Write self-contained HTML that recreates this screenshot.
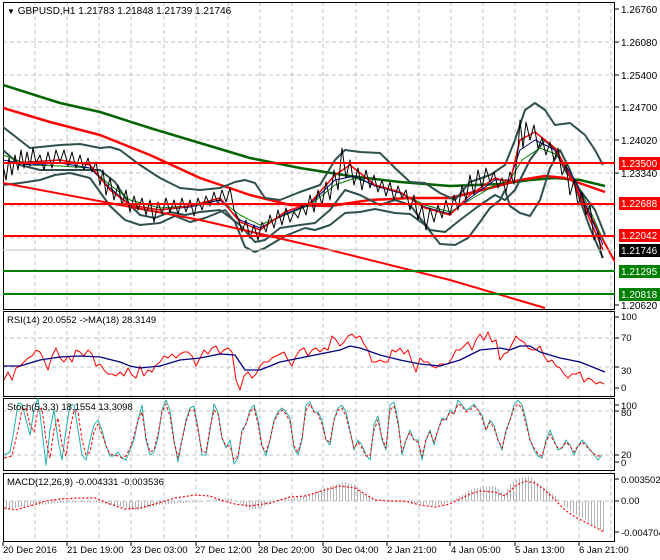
<!DOCTYPE html>
<html><head><meta charset="utf-8"><style>
html,body{margin:0;padding:0;background:#fff;}
svg{display:block;font-family:"Liberation Sans",sans-serif;}
</style></head><body>
<svg width="660" height="560" viewBox="0 0 660 560" xmlns="http://www.w3.org/2000/svg">
<defs>
<pattern id="hs" width="3" height="10" patternUnits="userSpaceOnUse"><rect x="0" y="0" width="1" height="10" fill="#b4b4b4"/></pattern>
<clipPath id="cm"><rect x="3" y="2" width="612" height="307"/></clipPath>
</defs>
<rect width="660" height="560" fill="#fff"/>
<g stroke="#c0c0c0" stroke-dasharray="4,3" stroke-width="1">
<path d="M35 2V542M67 2V542M99 2V542M131 2V542M164 2V542M196 2V542M228 2V542M260 2V542M292 2V542M323 2V542M356 2V542M388 2V542M419 2V542M451 2V542M483 2V542M515 2V542M547 2V542M579 2V542M611 2V542"/>
<path d="M3 42H615M3 75H615M3 107H615M3 140H615M3 173H615M3 206H615M3 238H615M3 271H615"/>
<path d="M3 338H615M3 367H615M3 411H615M3 455H615M3 501H615"/>
</g>
<g fill="none" stroke="#000" stroke-width="1">
<rect x="3.5" y="2.5" width="611" height="307"/>
<rect x="3.5" y="311.5" width="611" height="85"/>
<rect x="3.5" y="398.5" width="611" height="72"/>
<rect x="3.5" y="473.5" width="611" height="68"/>
</g>
<g clip-path="url(#cm)" fill="none" stroke-linejoin="round">
<polyline stroke="#006400" stroke-width="2.5" points="3,85 60,103 100,112 150,128 200,143 250,158 300,168 350,176 400,182 450,186 500,184 530,180 555,178 580,180 605,186"/>
<polyline stroke="#ff0000" stroke-width="2.5" points="3,108 50,122 100,135 150,155 200,178 250,195 290,205 330,206 370,200 410,198 450,198 490,188 520,180 545,176 565,178 585,185 605,192"/>
<polyline stroke="#2f4f4f" stroke-width="2" points="3,127 30,148 60,145 80,144 100,148 110,147 120,150 140,165 160,178 180,188 200,190 220,188 235,182 245,180 255,183 265,198 280,200 300,192 320,185 335,160 345,150 360,152 380,153 395,168 410,182 425,183 440,193 455,200 470,182 490,175 505,165 515,140 525,110 535,103 545,110 555,125 570,123 585,135 595,150 603,165"/>
<polyline stroke="#2f4f4f" stroke-width="2" points="3,150 20,165 40,170 60,170 80,170 100,170 115,182 130,205 140,215 155,218 170,212 185,215 200,212 220,210 240,225 255,242 265,240 280,228 300,225 315,223 330,210 345,190 360,195 380,205 395,200 410,205 420,218 430,230 445,232 460,220 480,205 495,195 505,200 515,190 530,160 545,140 555,150 565,170 580,190 595,210 605,235"/>
<polyline stroke="#2f4f4f" stroke-width="2" points="3,185 20,183 40,180 55,175 70,173 90,178 100,192 110,206 125,220 140,225 160,223 175,216 190,222 205,218 225,210 235,222 245,247 255,252 265,248 285,236 305,228 315,230 330,225 345,213 360,212 375,209 395,213 410,214 425,225 440,244 455,245 468,238 480,222 490,208 500,200 505,190 510,206 520,213 530,216 540,200 550,168 560,150 570,170 580,200 590,228 603,258"/>
<polyline stroke="#ff0000" stroke-width="2" points="3,183 200,220 330,250 450,280 545,308"/>
<polyline stroke="#ff0000" stroke-width="2" points="555,148 575,185 595,225 615,262"/>
<polyline stroke="#008000" stroke-width="1" points="3,155 30,165 60,166 90,168 110,185 130,200 160,208 190,206 220,200 240,215 260,225 285,215 310,205 335,185 355,178 375,185 400,193 425,205 450,212 470,200 495,185 510,180 522,160 540,148 558,155 575,180 590,210 603,240"/>
<polyline stroke="#00008b" stroke-width="1" points="3,160 30,165 60,163 90,168 110,188 130,205 160,210 190,207 220,200 240,220 260,228 285,214 310,204 335,180 355,176 375,186 400,193 425,207 450,214 470,198 495,180 510,180 520,150 535,140 555,150 575,180 590,215 603,245"/>
<polyline stroke="#ff0000" stroke-width="1.5" points="3,163 30,162 60,160 90,165 110,190 130,205 160,210 190,206 220,198 240,222 260,230 285,212 310,203 335,175 350,165 375,185 400,192 425,208 450,215 470,195 495,178 510,182 520,140 535,132 555,148 575,185 590,220 603,250"/>
<polyline stroke="#000" stroke-width="1" points="3,165 6,180 9,158 12,175 15,155 18,170 21,150 24,168 27,152 30,166 33,148 36,163 40,155 44,170 48,152 52,168 56,150 60,162 64,150 68,166 72,152 76,168 80,155 84,170 88,158 92,172 96,162 100,185 103,170 106,195 110,178 114,200 118,185 122,205 126,190 130,212 134,196 138,210 142,198 146,215 150,200 154,222 158,202 162,214 166,198 170,212 174,200 178,214 182,198 186,212 190,200 194,216 198,198 202,210 206,196 210,206 214,192 218,205 222,190 226,202 230,188 234,210 238,218 242,232 246,220 250,238 254,225 258,240 262,222 266,232 270,215 274,228 278,210 282,225 286,208 290,222 294,212 298,218 302,205 306,215 310,195 314,212 318,190 322,205 326,182 330,200 334,170 338,190 342,148 346,178 350,160 354,185 358,168 362,190 366,170 370,188 374,175 378,192 382,180 386,196 390,182 394,200 398,186 402,198 406,190 410,210 414,195 418,220 422,205 426,230 430,208 434,222 438,205 442,218 446,200 450,215 454,195 458,210 462,185 466,200 470,175 474,195 478,170 482,188 486,168 490,182 494,172 498,188 502,178 506,192 510,172 514,184 518,150 520,120 523,148 526,122 530,140 534,125 538,148 542,138 546,155 550,142 554,160 558,148 562,175 566,165 570,195 574,180 578,205 582,192 586,215 590,205 594,240 598,232 602,258"/>
</g>
<g stroke-width="2">
<line x1="3" y1="163" x2="615" y2="163" stroke="#ff0000"/>
<line x1="3" y1="204" x2="615" y2="204" stroke="#ff0000"/>
<line x1="3" y1="236" x2="615" y2="236" stroke="#ff0000"/>
<line x1="3" y1="271" x2="615" y2="271" stroke="#008000"/>
<line x1="3" y1="294" x2="615" y2="294" stroke="#008000"/>
<line x1="3" y1="250" x2="615" y2="250" stroke="#c0c0c0" stroke-width="1"/>
</g>
<g font-size="10" fill="#000">
<text x="621" y="13">1.26760</text>
<text x="621" y="46">1.26080</text>
<text x="621" y="79">1.25400</text>
<text x="621" y="111">1.24700</text>
<text x="621" y="144">1.24020</text>
<text x="621" y="177">1.23340</text>
<text x="621" y="309">1.20620</text>
</g>
<g font-size="10">
<rect x="619" y="157" width="41" height="13" fill="#ff0000"/><text x="621" y="167" fill="#fff">1.23500</text>
<rect x="619" y="197" width="41" height="13" fill="#ff0000"/><text x="621" y="207" fill="#fff">1.22688</text>
<rect x="619" y="229" width="41" height="13" fill="#ff0000"/><text x="621" y="239" fill="#fff">1.22042</text>
<rect x="619" y="244" width="41" height="13" fill="#000"/><text x="621" y="254" fill="#fff">1.21746</text>
<rect x="619" y="265" width="41" height="13" fill="#008000"/><text x="621" y="275" fill="#fff">1.21295</text>
<rect x="619" y="288" width="41" height="13" fill="#008000"/><text x="621" y="298" fill="#fff">1.20818</text>
</g>
<g stroke="#000"><path d="M615 9h4M615 42h4M615 75h4M615 107h4M615 140h4M615 173h4M615 305h4M615 317h4M615 338h4M615 367h4M615 388h4M615 405h4M615 411h4M615 455h4M615 462h4M615 479h4M615 501h4M615 532h4"/></g>
<text x="7" y="14" font-size="10"><tspan font-size="8">▼</tspan> GBPUSD,H1  1.21783 1.21848 1.21739 1.21746</text>
<g fill="none" stroke-linejoin="round">
<polyline stroke="#ff0000" stroke-width="1" points="4,380 8,372 12,380 16,368 20,366 24,362 28,358 32,356 36,350 40,352 44,360 48,370 52,356 56,348 60,358 64,362 68,356 72,362 76,350 80,352 84,356 88,350 92,354 96,366 100,364 104,370 108,374 112,374 116,376 120,372 124,376 128,368 132,375 136,378 140,366 144,376 148,370 152,372 156,365 160,362 164,356 168,358 172,354 176,358 180,354 184,352 188,352 192,356 196,366 200,358 204,350 208,354 212,348 216,346 220,354 224,350 228,348 232,352 236,380 240,390 244,376 248,372 252,378 256,374 260,366 264,362 268,362 272,358 276,356 280,354 284,352 288,360 292,366 296,356 300,350 304,348 308,356 312,350 316,348 320,352 324,348 328,350 332,336 336,340 340,346 344,342 348,336 352,334 356,338 360,336 364,344 368,350 372,362 376,362 380,360 384,362 388,362 392,350 396,352 400,348 404,354 408,350 412,362 416,372 420,358 424,362 428,362 432,366 436,368 440,364 444,364 448,364 452,358 456,350 460,350 464,346 468,342 472,350 476,340 480,334 484,340 488,332 492,342 496,340 500,360 504,354 508,352 512,344 516,336 520,340 524,342 528,348 532,350 536,350 540,346 544,356 548,362 552,360 556,366 560,368 564,374 568,378 572,374 576,374 580,372 584,382 588,378 592,380 596,384 600,382 604,384"/>
<polyline stroke="#000080" stroke-width="1.3" points="4,366 20,366 40,360 60,357 80,356 100,357 120,362 130,366 140,368 160,366 180,360 200,358 220,354 235,355 245,370 260,370 280,362 300,358 320,354 340,350 350,346 360,348 380,355 400,360 420,364 440,366 460,360 480,350 500,348 510,350 520,346 530,346 540,352 560,358 580,362 600,370 605,372"/>
</g>
<text x="7" y="323" font-size="9.5">RSI(14) 20.0552  -&gt;MA(18) 28.3149</text>
<g font-size="9.5"><text x="621" y="320">100</text><text x="621" y="341">70</text><text x="621" y="374">30</text><text x="621" y="391">0</text></g>
<g fill="none" stroke-linejoin="round" stroke-width="1">
<polyline stroke="#20b2aa" points="4,455 10,452 14,430 18,403 22,404 26,420 30,435 34,410 38,398 42,430 46,465 50,430 54,410 58,440 62,460 66,430 70,405 74,405 78,430 82,455 86,460 90,440 94,425 98,420 102,430 106,446 110,456 114,456 118,452 122,458 126,460 130,450 134,440 138,420 142,405 146,440 150,455 154,452 158,438 162,410 166,400 170,410 174,440 178,462 182,440 186,420 190,408 194,406 198,428 202,455 206,455 210,430 214,404 218,412 222,438 226,448 230,440 234,464 238,458 242,430 246,424 250,410 254,405 258,420 262,446 266,456 270,440 274,420 278,412 282,408 286,412 290,418 294,448 298,455 302,440 306,405 310,402 314,412 318,412 322,420 326,440 330,445 334,420 338,408 342,405 346,412 350,430 354,450 358,440 362,445 366,455 370,460 374,425 378,416 382,440 386,450 390,405 394,402 398,420 402,455 406,440 410,430 414,440 418,440 422,460 426,440 430,430 434,445 438,430 442,418 446,420 450,410 454,414 458,400 462,405 466,410 470,408 474,404 478,410 482,415 486,430 490,420 494,425 498,440 502,450 506,430 510,420 514,405 518,400 522,405 526,420 530,440 534,450 538,456 542,458 546,440 550,430 554,440 558,450 562,448 566,440 570,445 574,455 578,446 582,440 586,444 590,450 594,454 598,460 602,455"/>
<polyline stroke="#ff0000" stroke-dasharray="3,2" points="4,458 12,456 18,430 22,410 26,408 30,425 34,432 38,410 42,408 46,440 50,458 54,430 58,418 62,445 66,456 70,430 74,410 78,412 82,440 86,455 90,452 94,432 98,424 102,434 106,446 110,454 114,455 118,456 122,458 126,456 130,448 134,436 138,420 142,412 146,438 150,452 154,450 158,434 162,412 166,404 170,416 174,442 178,458 182,440 186,422 190,410 194,410 198,430 202,452 206,452 210,428 214,410 218,414 222,438 226,446 230,446 234,460 238,456 242,432 246,424 250,412 254,408 258,424 262,446 266,452 270,440 274,422 278,414 282,410 286,414 290,422 294,446 298,452 302,438 306,410 310,404 314,412 318,414 322,424 326,440 330,442 334,420 338,410 342,408 346,416 350,432 354,448 358,442 362,448 366,456 370,456 374,430 378,420 382,438 386,448 390,410 394,406 398,424 402,452 406,440 410,432 414,440 418,442 422,456 426,440 430,432 434,442 438,430 442,420 446,420 450,412 454,414 458,404 462,406 466,412 470,410 474,406 478,410 482,418 486,430 490,422 494,428 498,440 502,448 506,432 510,420 514,408 518,404 522,408 526,424 530,440 534,448 538,454 542,456 546,442 550,434 554,442 558,448 562,448 566,442 570,446 574,452 578,446 582,442 586,446 590,450 594,454 598,456 602,456"/>
</g>
<text x="7" y="410" font-size="9.5">Stoch(5,3,3) 18.1554 13.3098</text>
<g font-size="9.5"><text x="621" y="409">100</text><text x="621" y="416">80</text><text x="621" y="458">20</text><text x="621" y="466">0</text></g>
<polygon fill="url(#hs)" points="4,501 4,510 20,507 40,505 60,503 80,502 100,503 120,506 130,510 140,510 160,505 180,503 200,502 210,500 230,498 240,503 250,510 260,508 280,500 300,497 310,494 320,490 335,485 345,482 355,485 365,494 375,499 380,501 400,502 420,504 440,506 450,502 460,496 470,490 485,486 495,486 505,494 510,484 520,478 530,476 540,485 550,492 560,500 565,506 575,514 585,520 595,526 604,532 604,501"/>
<polyline fill="none" stroke="#ff0000" stroke-dasharray="2,2" stroke-width="1.2" points="4,508 15,510 30,506 45,501 60,499 80,498 95,498 110,504 125,509 140,508 155,504 175,498 195,495 210,496 220,500 235,504 250,506 270,503 290,497 305,496 315,493 325,490 340,486 355,488 365,494 375,500 390,501 405,501 420,505 435,507 450,504 460,499 470,494 480,491 495,492 505,496 515,486 525,481 535,483 545,490 555,500 565,510 575,517 585,522 595,527 604,532"/>
<text x="7" y="485" font-size="9.5">MACD(12,26,9) -0.004331 -0.003536</text>
<g font-size="9.5"><text x="621" y="483">0.003502</text><text x="621" y="504">0.00</text><text x="621" y="536">-0.004704</text></g>
<g stroke="#000"><path d="M3 542v4M67 542v4M131 542v4M196 542v4M259 542v4M323 542v4M387 542v4M450 542v4M515 542v4M579 542v4"/></g>
<g font-size="9.5">
<text x="3" y="553">20 Dec 2016</text>
<text x="67" y="553">21 Dec 19:00</text>
<text x="131" y="553">23 Dec 03:00</text>
<text x="195" y="553">27 Dec 12:00</text>
<text x="258" y="553">28 Dec 20:00</text>
<text x="322" y="553">30 Dec 04:00</text>
<text x="387" y="553">2 Jan 21:00</text>
<text x="451" y="553">4 Jan 05:00</text>
<text x="515" y="553">5 Jan 13:00</text>
<text x="579" y="553">6 Jan 21:00</text>
</g>
</svg>
</body></html>
